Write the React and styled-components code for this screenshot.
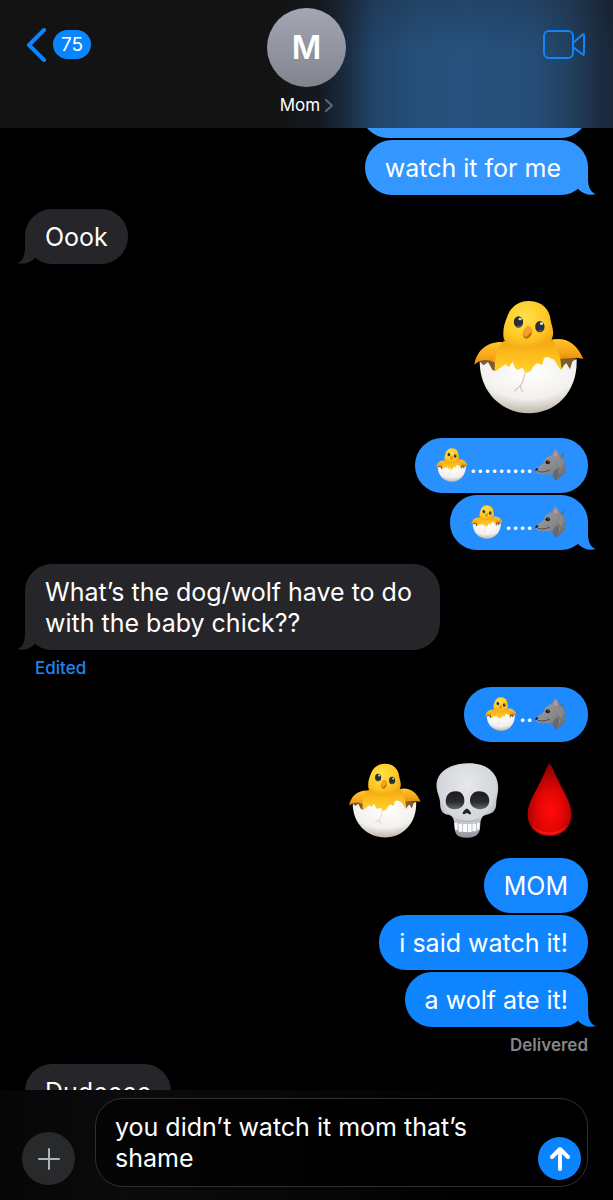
import React, { useId, useState } from 'react';
import styled, { createGlobalStyle } from 'styled-components';

const GlobalStyle = createGlobalStyle`
    * {
        box-sizing: border-box;
    }
    body {
        margin: 0;
        background: #000;
        color: #fff;
        font-family: Inter, "Liberation Sans", sans-serif;
        font-size: 25px;
        line-height: 31px;
    }
    button {
        padding: 0;
        border: 0;
        background: none;
        color: inherit;
        font: inherit;
        cursor: pointer;
    }
`;

const Screen = styled.div`
    display: flex;
    flex-direction: column;
    height: 100vh;
    overflow: hidden;
`;

// ---- header ----

const Header = styled.header`
    display: grid;
    grid-template-columns: 1fr auto 1fr;
    align-items: start;
    flex-shrink: 0;
    height: 128px;
    padding: 8px 26px 0;
    background:
        linear-gradient(to bottom, rgba(19, 19, 22, 0.2), rgba(19, 19, 22, 0) 40%),
        linear-gradient(to right, #131314 45%, #141920 52%, #192a3c 56%, #22446a 61%, #264f79 68%, #27517d 76%, #254d77 87%, #22405f 93%, #1b2c40 98%, #1a2738 100%);
`;

const BackLink = styled.a`
    display: flex;
    align-items: center;
    gap: 6px;
    justify-self: start;
    height: 73px;
    color: #0a84ff;
    text-decoration: none;
`;

const Badge = styled.span`
    padding: 0 8px;
    border-radius: 15px;
    background: #0a84ff;
    color: #fff;
    font-size: 19px;
    line-height: 29px;
`;

const Contact = styled.button`
    display: flex;
    flex-direction: column;
    align-items: center;
    gap: 8px;
`;

const Avatar = styled.span`
    width: 79px;
    height: 79px;
    border-radius: 50%;
    background: linear-gradient(#a3a7b4, #82848c);
    font-size: 32px;
    font-weight: 600;
    line-height: 80px;
`;

const ContactName = styled.span`
    display: flex;
    align-items: center;
    gap: 5px;
    font-size: 17px;
    line-height: 20px;
`;

const VideoButton = styled.button`
    display: flex;
    align-items: center;
    justify-self: end;
    height: 73px;
`;

// ---- messages ----

const Thread = styled.main`
    flex: 1;
    min-height: 0;
    overflow: hidden;
    padding: 0 25px;
`;

// starts above the fold, the oldest bubble slides under the header
const List = styled.div`
    display: flex;
    flex-direction: column;
    gap: 14px;
    margin-top: -45px;
`;

const Group = styled.section`
    display: flex;
    flex-direction: column;
    align-items: ${({ $mine }) => ($mine ? 'flex-end' : 'flex-start')};
    gap: 2px;
`;

const BubbleBox = styled.div`
    position: relative;
    max-width: 415px;
    min-width: ${({ $min }) => $min || 0}px;
    min-height: 55px;
    padding: 13px 20px 11px;
    border-radius: 27px;
    background: ${({ $tone }) => $tone};
`;

const TailSvg = styled.svg`
    position: absolute;
    bottom: 0;
    ${({ $mine }) => ($mine ? 'right: -9px;' : 'left: -9px; transform: scaleX(-1);')}
`;

const Line = styled.span`
    display: flex;
    align-items: center;
    height: 28px;
`;

const Dots = styled.span`
    font-size: 22px;
    font-weight: 600;
`;

const EmojiCell = styled.span`
    display: grid;
    place-items: center;
    width: 35px;
`;

const Status = styled.span`
    margin: 6px ${({ $mine }) => ($mine ? 0 : 10)}px -5px;
    color: ${({ $mine }) => ($mine ? '#85858a' : '#1c87f2')};
    font-size: 17px;
    font-weight: ${({ $mine }) => ($mine ? 600 : 500)};
    line-height: 20px;
`;

const BigEmoji = styled.div`
    display: flex;
    padding: 22px 4px 10px;
`;

const EmojiRow = styled.div`
    display: grid;
    grid-template-columns: repeat(3, 82px);
    justify-items: center;
    margin-right: -2px;
    padding: 19px 0 18px;
`;

// ---- composer ----

const Composer = styled.form`
    display: flex;
    align-items: flex-end;
    gap: 20px;
    flex-shrink: 0;
    padding: 8px 25px 13px 22px;
    background: linear-gradient(to right, #060607, #0b0b0d 20%, #060607 55%, #010101 75%);
`;

const PlusButton = styled.button`
    display: grid;
    place-items: center;
    width: 53px;
    height: 53px;
    margin-bottom: 2px;
    border-radius: 50%;
    background: #28292b;
`;

const Field = styled.div`
    display: flex;
    align-items: flex-end;
    flex: 1;
    padding: 0 6px 6px 19px;
    border: 1px solid #303033;
    border-radius: 28px;
    background: linear-gradient(to right, #050506, #000 60%);
`;

const Input = styled.textarea`
    flex: 1;
    min-width: 0;
    height: 81px;
    padding: 13px 0 0;
    border: 0;
    outline: 0;
    overflow: hidden;
    resize: none;
    background: transparent;
    color: #fff;
    font: inherit;
`;

const SendButton = styled.button`
    display: grid;
    place-items: center;
    width: 43px;
    height: 43px;
    border-radius: 50%;
    background: #0a84ff;
`;

const Chick = ({ width, height }) => {
    const id = useId();
    return (
        <svg width={width} height={height} viewBox="43 61 329 342" preserveAspectRatio="none" role="img" aria-label="hatching chick">
            <defs>
                <radialGradient id={id + 'head'} cx="0.42" cy="0.35" r="0.7">
                    <stop offset="0" stopColor="#ffe04a" />
                    <stop offset="0.6" stopColor="#ffcb26" />
                    <stop offset="1" stopColor="#f3a914" />
                </radialGradient>
                <linearGradient id={id + 'body'} x1="0" y1="0" x2="0" y2="1">
                    <stop offset="0" stopColor="#f0a513" />
                    <stop offset="0.4" stopColor="#fdbb1b" />
                    <stop offset="1" stopColor="#ffd42c" />
                </linearGradient>
                <linearGradient id={id + 'wing'} x1="0" y1="0" x2="0" y2="1">
                    <stop offset="0" stopColor="#ffc62a" />
                    <stop offset="0.6" stopColor="#f8a81a" />
                    <stop offset="1" stopColor="#e88f0c" />
                </linearGradient>
                <radialGradient id={id + 'shell'} cx="0.5" cy="0.25" r="0.75">
                    <stop offset="0" stopColor="#ffffff" />
                    <stop offset="0.65" stopColor="#f3f1ee" />
                    <stop offset="1" stopColor="#bdb5a8" />
                </radialGradient>
            </defs>
            <path d="M61 245 L75 234 L108 240 L118 285 L90 280 Z M292 236 L348 236 L340 262 L300 285 Z" fill="#7d5c2c" />
            <path d="M44 255 C50 215 80 183 134 187 L128 240 L106 250 C90 238 65 236 44 255 Z" fill={`url(#${id}wing)`} />
            <path d="M268 182 C315 168 350 190 370 238 C350 232 325 238 296 238 Z" fill={`url(#${id}wing)`} />
            <path d="M132 184 C110 205 102 240 106 285 L306 285 C304 245 298 206 277 180 Z" fill={`url(#${id}body)`} />
            <path d="M206 64 C248 63 270 92 272 120 C275 138 282 150 279 168 C274 196 244 206 205 206 C165 206 135 198 131 172 C129 150 134 130 142 112 C152 82 174 65 206 64 Z" fill={`url(#${id}head)`} />
            <ellipse cx="176" cy="127" rx="14" ry="17" fill="#292e31" />
            <ellipse cx="240" cy="141" rx="14" ry="17" fill="#292e31" />
            <ellipse cx="181" cy="118" rx="5" ry="4" fill="#d9dde0" />
            <ellipse cx="245" cy="132" rx="5" ry="4" fill="#d9dde0" />
            <path d="M172 138 q5 4 11 0 M236 152 q5 4 11 0" fill="none" stroke="#68737a" strokeWidth="3" />
            <path d="M204 139 C214 143 220 152 216 161 C212 176 200 181 193 175 C187 166 190 148 204 139 Z" fill="#c9690c" />
            <path d="M204 138 C214 143 219 151 216 158 C208 160 203 170 198 172 C187 166 189 148 204 138 Z" fill="#f6a02a" />
            <path d="M60 245 L72 257 L85 247 L98 271 L108 275 L125 262 L137 254 L147 262 L158 246 L165 263 L172 271 L188 264 L197 281 L212 275 L222 258 L232 250 L247 256 L252 236 L262 231 L283 240 L292 256 L303 271 L312 257 L319 250 L330 269 L338 244 L350 238 C354 335 290 401 208 401 C125 400 60 338 60 245 Z" fill={`url(#${id}shell)`} />
            <path d="M196 280 C188 298 196 304 181 318 L163 335 M181 318 L188 337" fill="none" stroke="#cfc4a9" strokeWidth="3" />
        </svg>
    );
};

const Wolf = () => {
    const id = useId();
    return (
        <svg width="32" height="33" viewBox="404 55 98 98" role="img" aria-label="wolf">
            <defs>
                <linearGradient id={id} x1="0" y1="0" x2="1" y2="1">
                    <stop offset="0" stopColor="#a2a4a8" />
                    <stop offset="0.6" stopColor="#85878b" />
                    <stop offset="1" stopColor="#5d5f63" />
                </linearGradient>
            </defs>
            <path d="M478 80 L494 63 L490 84 Z" fill="#6d6f73" />
            <path d="M405 117 C412 108 424 103 430 96 C434 82 444 75 457 72 C458 64 462 59 468 56 C474 62 477 70 479 77 C489 80 493 88 493 94 L500 98 L496 103 L500 114 L495 115 L498 125 L491 126 L490 137 L484 135 L478 146 L473 141 L471 151 C462 147 459 139 458 131 C446 132 432 132 420 129 C411 129 405 124 405 117 Z" fill={`url(#${id})`} />
            <path d="M462 73 C463 67 465 63 468 61 C472 66 473 71 473 78 Z" fill="#d78b91" />
            <path d="M458 131 C461 118 472 110 482 112 C478 122 475 132 471 151 C462 147 459 139 458 131 Z" fill="#5f6165" opacity="0.7" />
            <path d="M484 90 L489 104 M479 98 L487 117 M476 113 L481 128" stroke="#b0b2b5" strokeWidth="2" opacity="0.6" />
            <path d="M413 122 C428 126 438 123 449 118" fill="none" stroke="#4a4b4e" strokeWidth="3" />
            <ellipse cx="443" cy="94" rx="7" ry="6" fill="#242323" />
            <circle cx="445" cy="92" r="2" fill="#9a6840" />
            <path d="M405 118 C405 113 410 111 414 113 C414 118 410 121 406 121 Z" fill="#1d1e20" />
        </svg>
    );
};

const Skull = () => {
    const id = useId();
    return (
        <svg width="63" height="75" viewBox="286 39 189 226" role="img" aria-label="skull">
            <defs>
                <radialGradient id={id + 'bone'} cx="0.5" cy="0.3" r="0.7">
                    <stop offset="0" stopColor="#e6e8eb" />
                    <stop offset="0.65" stopColor="#d3d6da" />
                    <stop offset="1" stopColor="#8f9399" />
                </radialGradient>
                <linearGradient id={id + 'eye'} x1="0" y1="0" x2="0" y2="1">
                    <stop offset="0" stopColor="#1c1c1e" />
                    <stop offset="0.6" stopColor="#2b2b2d" />
                    <stop offset="1" stopColor="#66686c" />
                </linearGradient>
            </defs>
            <path d="M380 40 C432 38 473 65 473 112 C473 132 468 142 467 162 C467 183 455 192 437 195 C424 198 420 208 419 225 C418 250 412 263 378 264 C345 263 342 250 341 225 C340 208 336 198 323 195 C305 192 298 182 298 160 C298 142 288 130 287 108 C287 65 330 41 380 40 Z" fill={`url(#${id}bone)`} />
            <path d="M343 124 C362 122 372 136 371 154 C370 170 358 178 341 178 C324 177 314 168 315 152 C316 135 326 125 343 124 Z" fill={`url(#${id}eye)`} />
            <path d="M416 124 C435 124 446 136 446 152 C446 168 436 177 418 178 C401 178 389 169 388 153 C388 137 398 123 416 124 Z" fill={`url(#${id}eye)`} />
            <path d="M378 176 C387 180 393 190 391 193 C386 196 382 190 379 190 C375 190 371 196 366 192 C365 188 370 180 378 176 Z" fill="#222325" />
            <path d="M341 217 C365 223 395 223 418 217 L416 244 C395 250 363 250 343 244 Z" fill="#a1a5aa" />
            <path d="M341 219 h10 v22 h-8 Z M353 221 h12 v25 h-11 Z M367 222 h12 v25 h-12 Z M381 222 h12 v25 h-12 Z M395 221 h12 v24 h-12 Z M409 219 h9 l-2 21 h-7 Z" fill="#fbfbfc" />
            <path d="M345 210 C365 216 395 216 416 210" fill="none" stroke="#b4b7bc" strokeWidth="4" />
        </svg>
    );
};

const Drop = () => {
    const id = useId();
    return (
        <svg width="45" height="74" viewBox="558 44 136 220" role="img" aria-label="drop of blood">
            <defs>
                <radialGradient id={id} cx="0.52" cy="0.66" r="0.6">
                    <stop offset="0" stopColor="#ff0b08" />
                    <stop offset="0.5" stopColor="#e20605" />
                    <stop offset="1" stopColor="#960203" />
                </radialGradient>
            </defs>
            <path d="M626 45 C633 47 640 70 655 100 C675 140 692 165 692 196 C692 236 664 262 626 262 C587 262 560 236 560 196 C560 165 580 135 598 100 C612 72 620 46 626 45 Z" fill={`url(#${id})`} />
            <path d="M573 228 C598 260 652 260 680 227 C664 267 590 269 573 228 Z" fill="#ff2a1e" opacity="0.6" />
        </svg>
    );
};

const Bubble = ({ mine, tone = '#26252a', tail, min, children }) => (
    <BubbleBox $tone={tone} $min={min}>
        {children}
        {tail && (
            <TailSvg $mine={mine} width="20" height="28" viewBox="0 0 20 28" aria-hidden="true">
                <path d="M11 0 V12 C11 20 14 26 19 27 C13 29 6 27 1 22 L0 8 Z" fill={tone} />
            </TailSvg>
        )}
    </BubbleBox>
);

// chick, a run of dots, wolf
const ChaseLine = ({ dots }) => (
    <Line>
        <EmojiCell><Chick width={32} height={34} /></EmojiCell>
        <Dots>{'.'.repeat(dots)}</Dots>
        <EmojiCell><Wolf /></EmojiCell>
    </Line>
);

const App = () => {
    const [draft, setDraft] = useState('you didn’t watch it mom that’s shame');

    return (
        <Screen>
            <GlobalStyle />
            <Header>
                <BackLink href="#" aria-label="Back, 75 unread">
                    <svg width="21" height="34" viewBox="0 0 21 34" fill="none" stroke="#0a84ff" strokeWidth="4" strokeLinecap="round" strokeLinejoin="round" aria-hidden="true">
                        <path d="M18 2 L3 17 L18 32" />
                    </svg>
                    <Badge>75</Badge>
                </BackLink>
                <Contact type="button">
                    <Avatar>M</Avatar>
                    <ContactName>
                        Mom
                        <svg width="8" height="13" viewBox="0 0 8 13" fill="none" stroke="#5f6873" strokeWidth="2" strokeLinecap="round" strokeLinejoin="round" aria-hidden="true">
                            <path d="M1 1 L7 6.5 L1 12" />
                        </svg>
                    </ContactName>
                </Contact>
                <VideoButton type="button" aria-label="Video call">
                    <svg width="44" height="30" viewBox="0 0 44 30" fill="none" stroke="#0f84fb" strokeWidth="2" strokeLinejoin="round" aria-hidden="true">
                        <rect x="1" y="1" width="29" height="27" rx="5" />
                        <path d="M30 13 L39 5 Q41 3 41 6 V23 Q41 26 39 24 L30 17" />
                    </svg>
                </VideoButton>
            </Header>

            <Thread>
                <List>
                    <Group $mine>
                        <Bubble mine tone="#3698ff" min={227} />
                        <Bubble mine tone="#3496ff" tail>watch it for me&nbsp;</Bubble>
                    </Group>
                    <Group>
                        <Bubble tail>Oook</Bubble>
                    </Group>
                    <Group $mine>
                        <BigEmoji><Chick width={110} height={114} /></BigEmoji>
                    </Group>
                    <Group $mine>
                        <Bubble mine tone="#2890ff"><ChaseLine dots={9} /></Bubble>
                        <Bubble mine tone="#258fff" tail><ChaseLine dots={4} /></Bubble>
                    </Group>
                    <Group>
                        <Bubble tail>What’s the dog/wolf have to do with the baby chick??</Bubble>
                        <Status as="button" type="button">Edited</Status>
                    </Group>
                    <Group $mine>
                        <Bubble mine tone="#1d8aff"><ChaseLine dots={2} /></Bubble>
                        <EmojiRow>
                            <Chick width={72} height={75} />
                            <Skull />
                            <Drop />
                        </EmojiRow>
                        <Bubble mine tone="#1486ff">MOM</Bubble>
                        <Bubble mine tone="#1185ff">i said watch it!</Bubble>
                        <Bubble mine tone="#0e84ff" tail>a wolf ate it!</Bubble>
                        <Status $mine>Delivered</Status>
                    </Group>
                    <Group>
                        <Bubble>Dudeeee</Bubble>
                    </Group>
                </List>
            </Thread>

            <Composer onSubmit={(e) => e.preventDefault()}>
                <PlusButton type="button" aria-label="Add attachment">
                    <svg width="22" height="22" viewBox="0 0 22 22" stroke="#b2b3b5" strokeWidth="2" strokeLinecap="round" aria-hidden="true">
                        <path d="M11 1 V21 M1 11 H21" />
                    </svg>
                </PlusButton>
                <Field>
                    <Input aria-label="Message" value={draft} onChange={(e) => setDraft(e.target.value)} />
                    <SendButton type="submit" aria-label="Send">
                        <svg width="22" height="26" viewBox="0 0 22 26" fill="none" stroke="#fff" strokeWidth="4" strokeLinecap="round" strokeLinejoin="round" aria-hidden="true">
                            <path d="M11 23 V3 M3 11 L11 3 L19 11" />
                        </svg>
                    </SendButton>
                </Field>
            </Composer>
        </Screen>
    );
};

export default App;
